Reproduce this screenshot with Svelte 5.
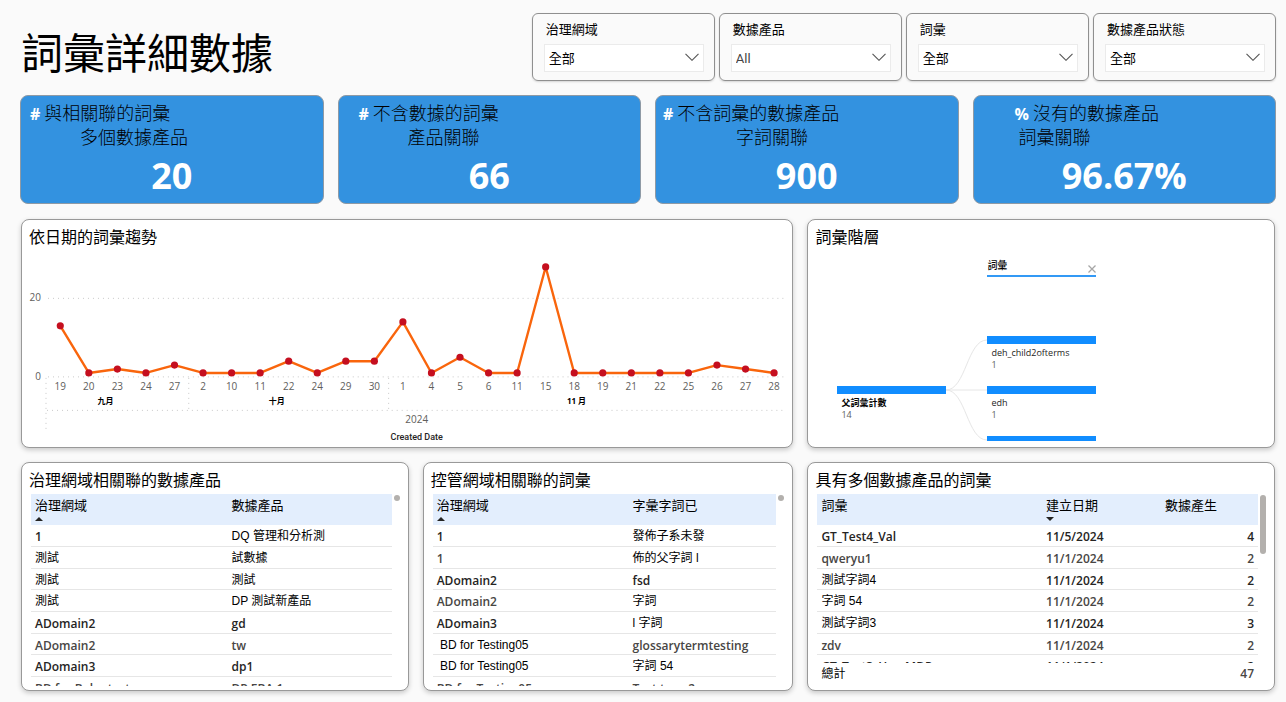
<script lang="ts">
  interface Kpi {
    sign: string;
    lines: string[];
    indents: number[];
    value: string;
  }

  interface Column {
    label: string;
    width: string;
    sort?: 'ascending' | 'descending';
  }

  interface TablePanel {
    title: string;
    columns: Column[];
    rows: string[][];
    total?: string[];
  }

  const slicers = [
    { id: 'domain', label: '治理網域', value: '全部' },
    { id: 'product', label: '數據產品', value: 'All' },
    { id: 'term', label: '詞彙', value: '全部' },
    { id: 'status', label: '數據產品狀態', value: '全部' }
  ];

  const kpis: Kpi[] = [
    { sign: '#', lines: ['與相關聯的詞彙', '多個數據產品'], indents: [9, 59], value: '20' },
    { sign: '#', lines: ['不含數據的詞彙', '產品關聯'], indents: [20, 69], value: '66' },
    { sign: '#', lines: ['不含詞彙的數據產品', '字詞關聯'], indents: [7, 80], value: '900' },
    { sign: '%', lines: ['沒有的數據產品', '詞彙關聯'], indents: [41, 45], value: '96.67%' }
  ];

  // trend chart
  const months = [
    { label: '九月', days: [19, 20, 23, 24, 27], counts: [13, 1, 2, 1, 3] },
    { label: '十月', days: [2, 10, 11, 22, 24, 29, 30], counts: [1, 1, 1, 4, 1, 4, 4] },
    {
      label: '11 月',
      days: [1, 4, 5, 6, 11, 15, 18, 19, 21, 22, 25, 26, 27, 28],
      counts: [14, 1, 5, 1, 1, 28, 1, 1, 1, 1, 1, 3, 2, 1]
    }
  ];
  const plot = { left: 17, right: 756, zero: 126, unit: 3.93 };
  const days = months.flatMap((m) => m.days);
  const counts = months.flatMap((m) => m.counts);
  const step = (plot.right - plot.left + 4) / days.length;
  const px = (i: number) => plot.left + step * (i + 0.5);
  const py = (v: number) => plot.zero - v * plot.unit;
  const line = counts.map((c, i) => `${px(i)},${py(c)}`).join(' ');

  const monthBands = months.map((m, i) => {
    const start = months.slice(0, i).reduce((sum, p) => sum + p.days.length, 0);
    return {
      label: m.label,
      start: plot.left + step * start,
      middle: plot.left + step * (start + m.days.length / 2)
    };
  });

  // term hierarchy
  const nodes = [
    { x: 22, y: 135, label: '父詞彙計數', count: '14', root: true },
    { x: 172, y: 85, label: 'deh_child2ofterms', count: '1', root: false },
    { x: 172, y: 135, label: 'edh', count: '1', root: false },
    { x: 172, y: 185, label: '', count: '', root: false }
  ];

  const tables: TablePanel[] = [
    {
      title: '治理網域相關聯的數據產品',
      columns: [
        { label: '治理網域', width: '54.5%', sort: 'ascending' },
        { label: '數據產品', width: '45.5%' }
      ],
      rows: [
        ['1', 'DQ 管理和分析測'],
        ['測試', '試數據'],
        ['測試', '測試'],
        ['測試', 'DP 測試新產品'],
        ['ADomain2', 'gd'],
        ['ADomain2', 'tw'],
        ['ADomain3', 'dp1'],
        ['BD for Babu test', 'DP EBA 1']
      ]
    },
    {
      title: '控管網域相關聯的詞彙',
      columns: [
        { label: '治理網域', width: '57%', sort: 'ascending' },
        { label: '字彙字詞已', width: '43%' }
      ],
      rows: [
        ['1', '發佈子系未發'],
        ['1', '佈的父字詞 l'],
        ['ADomain2', 'fsd'],
        ['ADomain2', '字詞'],
        ['ADomain3', 'l 字詞'],
        ['\u00a0BD for Testing05', 'glossarytermtesting'],
        ['\u00a0BD for Testing05', '字詞 54'],
        ['BD for Testing05', 'Test term2']
      ]
    },
    {
      title: '具有多個數據產品的詞彙',
      columns: [
        { label: '詞彙', width: '51%' },
        { label: '建立日期', width: '27%', sort: 'descending' },
        { label: '數據產生', width: '22%' }
      ],
      rows: [
        ['GT_Test4_Val', '11/5/2024', '4'],
        ['qweryu1', '11/1/2024', '2'],
        ['測試字詞4', '11/1/2024', '2'],
        ['字詞 54', '11/1/2024', '2'],
        ['測試字詞3', '11/1/2024', '3'],
        ['zdv', '11/1/2024', '2'],
        ['GT_Test3_Has_MDP', '11/1/2024', '2']
      ],
      total: ['總計', '', '47']
    }
  ];

  const hasHan = (text: string) => /[\u4e00-\u9fff]/.test(text);
  const isPlain = (text: string) => hasHan(text) || text.startsWith('\u00a0');
</script>

<main class="report">
  <header class="top">
    <h1>詞彙詳細數據</h1>
    <div class="slicers">
      {#each slicers as s}
        <div class="slicer">
          <label for={s.id}>{s.label}</label>
          <div class="select-wrap">
            <select id={s.id} class:latin={!hasHan(s.value)}>
              <option>{s.value}</option>
            </select>
            <svg class="chevron" viewBox="0 0 14 8" aria-hidden="true">
              <path d="M0.5 0.8 L7 7.3 L13.5 0.8" />
            </svg>
          </div>
        </div>
      {/each}
    </div>
  </header>

  <section class="kpis">
    {#each kpis as k}
      <article class="kpi">
        <h2>
          <span class="kpi-line" style="padding-left: {k.indents[0]}px"><b>{k.sign}</b> {k.lines[0]}</span>
          <span class="kpi-line" style="padding-left: {k.indents[1]}px">{k.lines[1]}</span>
        </h2>
        <p>{k.value}</p>
      </article>
    {/each}
  </section>

  <div class="panels">
    <section class="panel trend">
      <h2>依日期的詞彙趨勢</h2>
      <svg viewBox="0 0 757 196" role="img" aria-label="依日期的詞彙趨勢">
        <g class="grid">
          <line x1="19" x2={plot.right} y1={py(20)} y2={py(20)} />
          <line x1="19" x2={plot.right} y1={py(0)} y2={py(0)} />
          <line x1="18" x2={plot.right} y1="159.5" y2="159.5" />
          {#each monthBands as band, i}
            <line x1={band.start} x2={band.start} y1="127" y2={i === 0 ? 180 : 160} />
          {/each}
        </g>
        <g class="axis">
          <text x="12" y={py(20) + 3} text-anchor="end">20</text>
          <text x="12" y={py(0) + 3} text-anchor="end">0</text>
          {#each days as d, i}
            <text x={px(i)} y="139" text-anchor="middle">{d}</text>
          {/each}
          <text x="388" y="172" text-anchor="middle">2024</text>
        </g>
        {#each monthBands as band}
          <text class="month" x={band.middle - 12} y="153" text-anchor="middle">{band.label}</text>
        {/each}
        <text class="axis-title" x="388" y="189" text-anchor="middle">Created Date</text>
        <polyline class="series" points={line} />
        {#each counts as c, i}
          <circle class="dot" cx={px(i)} cy={py(c)} r="3.6" />
        {/each}
      </svg>
    </section>

    <section class="panel hierarchy">
      <h2>詞彙階層</h2>
      <div class="tree">
        <div class="level">
          <span>詞彙</span>
          <button type="button" aria-label="移除詞彙">
            <svg viewBox="0 0 8 8" aria-hidden="true"><path d="M0.5 0.5 L7.5 7.5 M7.5 0.5 L0.5 7.5" /></svg>
          </button>
        </div>
        <svg class="links" viewBox="0 0 280 190" aria-hidden="true">
          <path d="M131 139 C151 139 152 89 172 89" />
          <path d="M131 139 H172" />
          <path d="M131 139 C151 139 152 189 172 189" />
        </svg>
        {#each nodes as n}
          <div class="node" class:root={n.root} style="left: {n.x}px; top: {n.y}px">
            <div class="bar"></div>
            {#if n.label}
              <div class="name">{n.label}</div>
              <div class="count">{n.count}</div>
            {/if}
          </div>
        {/each}
      </div>
    </section>

    {#each tables as t}
      <section class="panel">
        <h2>{t.title}</h2>
        <div class="table-area">
          <div class="table-col">
            <div class="scroll" class:short={t.total}>
              <table>
                <colgroup>
                  {#each t.columns as c}
                    <col style="width: {c.width}" />
                  {/each}
                </colgroup>
                <thead>
                  <tr>
                    {#each t.columns as c}
                      <th scope="col" aria-sort={c.sort}>
                        {c.label}
                        {#if c.sort}
                          <svg class="sort" class:down={c.sort === 'descending'} viewBox="0 0 8 4" aria-hidden="true">
                            <path d="M0 4 L4 0 L8 4 Z" />
                          </svg>
                        {/if}
                      </th>
                    {/each}
                  </tr>
                </thead>
                <tbody>
                  {#each t.rows as row}
                    <tr>
                      {#each row as cell, i}
                        <td class:plain={isPlain(cell)} class:num={i === 2}>{cell}</td>
                      {/each}
                    </tr>
                  {/each}
                </tbody>
              </table>
            </div>
            {#if t.total}
              <div class="total">
                <span class="plain">{t.total[0]}</span>
                <span>{t.total[2]}</span>
              </div>
            {/if}
          </div>
          <div class="thumb" class:long={t.total}></div>
        </div>
      </section>
    {/each}
  </div>
</main>

<style>
  :global(body) {
    margin: 0;
    background: #fafafa;
    color: #000;
    font-family: 'Open Sans', 'Noto Sans CJK TC', sans-serif;
  }

  h1, h2, p { margin: 0; font-weight: 400; }

  .report { padding: 13px 10px 10px 20px; display: flex; flex-direction: column; gap: 14px; }

  .top { display: grid; grid-template-columns: minmax(0, 11fr) minmax(0, 16fr); align-items: center; }
  h1 { font-family: 'Noto Sans CJK TC', sans-serif; font-size: 42px; line-height: 56px; padding: 8px 0 0 1px; white-space: nowrap; }

  .slicers { display: grid; grid-template-columns: repeat(4, 1fr); gap: 4px; }
  .slicer { border: 1px solid #8f8f8f; border-radius: 6px; padding: 5px 10px 8px 11px; box-shadow: 0 1px 2px rgba(0, 0, 0, 0.15); }
  .slicer label { display: block; font-size: 13px; line-height: 20px; padding: 0 2px; margin-bottom: 5px; }
  .select-wrap { position: relative; }
  select {
    display: block; width: 100%; height: 28px; box-sizing: border-box; padding: 0 4px;
    appearance: none; background: #fff; border: 1px solid #ebebeb; border-radius: 0;
    font-family: inherit; font-size: 13px; color: #000;
  }
  select.latin { font-family: Roboto, sans-serif; color: #444; }
  .chevron { position: absolute; right: 5px; top: 9px; width: 14px; height: 8px; pointer-events: none; }
  .chevron path { fill: none; stroke: #555; stroke-width: 1.1; }

  .kpis { display: grid; grid-template-columns: repeat(4, 1fr); gap: 14px; }
  .kpi { box-sizing: border-box; background: #3392e0; border: 1px solid #8f9aa5; border-radius: 8px; padding: 4px 0 0; height: 109px; }
  .kpi h2 { font-size: 18px; line-height: 24px; font-family: 'Noto Sans CJK TC', sans-serif; font-weight: 300; }
  .kpi-line { display: block; white-space: nowrap; }
  .kpi b { font-family: 'Open Sans', sans-serif; font-size: 16px; line-height: 1; font-weight: 700; color: #fff; }
  .kpi p { text-align: center; font-size: 36px; line-height: 50px; font-weight: 700; color: #fff; padding-top: 3px; }

  .panels { display: grid; grid-template-columns: 388fr 371fr 468fr; gap: 14px; padding: 1px 1px 0; }
  .panel { min-width: 0; background: #fff; border: 1px solid #999; border-radius: 8px; padding: 7px 7px 0; box-shadow: 0 2px 5px rgba(0, 0, 0, 0.2); }
  .trend { grid-column: span 2; }
  .panel h2 { font-size: 16px; line-height: 20px; margin-bottom: 4px; white-space: nowrap; }

  .trend svg { display: block; width: 100%; }
  .grid line { stroke: #c8c8c8; stroke-width: 1; stroke-dasharray: 1 4; }
  .axis text { font-size: 10px; fill: #605e5c; }
  .month { font-size: 8px; font-weight: 700; fill: #000; }
  .axis-title { font-family: Roboto, sans-serif; font-size: 9px; font-weight: 500; fill: #252423; }
  .series { fill: none; stroke: #f9650c; stroke-width: 2.4; stroke-linejoin: round; }
  .dot { fill: #c50f1f; }

  .tree { position: relative; height: 190px; overflow: hidden; font-size: 9px; }
  .level {
    position: absolute; left: 172px; top: 7px; width: 109px; height: 19px; box-sizing: border-box;
    display: flex; justify-content: space-between; border-bottom: 2px solid #3399f5;
    font-size: 10px; line-height: 14px; font-weight: 500;
  }
  .level button { align-self: flex-end; padding: 0; margin-bottom: 2px; border: 0; background: none; line-height: 0; cursor: pointer; }
  .level svg { width: 8px; height: 8px; }
  .level path { stroke: #a6a6a6; stroke-width: 1.3; }
  .links { position: absolute; left: 0; top: 0; width: 280px; height: 190px; }
  .links path { fill: none; stroke: #e6e6e6; }
  .node { position: absolute; width: 109px; }
  .bar { height: 8px; background: #118dff; }
  .name { padding: 3px 4px 0; line-height: 12px; color: #252423; }
  .count { padding: 0 4px; line-height: 12px; color: #605e5c; }
  .root .name { font-weight: 700; color: #000; }

  .table-area { display: flex; gap: 2px; padding: 0 1px 4px 2px; }
  .table-col { flex: 1; min-width: 0; }
  .scroll { height: 192px; overflow: hidden; }
  .scroll.short { height: 169px; }
  table { width: 100%; table-layout: fixed; border-collapse: separate; border-spacing: 0; font-size: 12px; }
  th {
    height: 31px; box-sizing: border-box; padding: 2px 4px 0; background: #e3eefd;
    font-size: 13px; line-height: 18px; font-weight: 400; text-align: left; vertical-align: top; white-space: nowrap;
  }
  .sort { display: block; width: 8px; height: 4px; margin-top: 3px; }
  .sort path { fill: #252423; }
  .sort.down { transform: rotate(180deg); }
  td {
    height: 22px; box-sizing: border-box; padding: 3px 4px 0; border-bottom: 1px solid #e6e6e6;
    line-height: 17px; font-weight: 600; color: #252423; white-space: nowrap;
  }
  tr:nth-child(3n) td { height: 21px; }
  tr:nth-child(even) td { color: #484644; }
  tr td.plain, .plain { font-family: 'Liberation Sans', 'Noto Sans CJK TC', sans-serif; font-weight: 400; color: #000; }
  .num { text-align: right; }
  .total { display: flex; justify-content: space-between; padding: 0 4px; font-size: 12px; line-height: 22px; font-weight: 600; color: #484644; }
  .thumb { width: 6px; height: 6px; margin-top: 1px; border-radius: 3px; background: #b3b0ad; }
  .thumb.long { height: 59px; }
</style>
